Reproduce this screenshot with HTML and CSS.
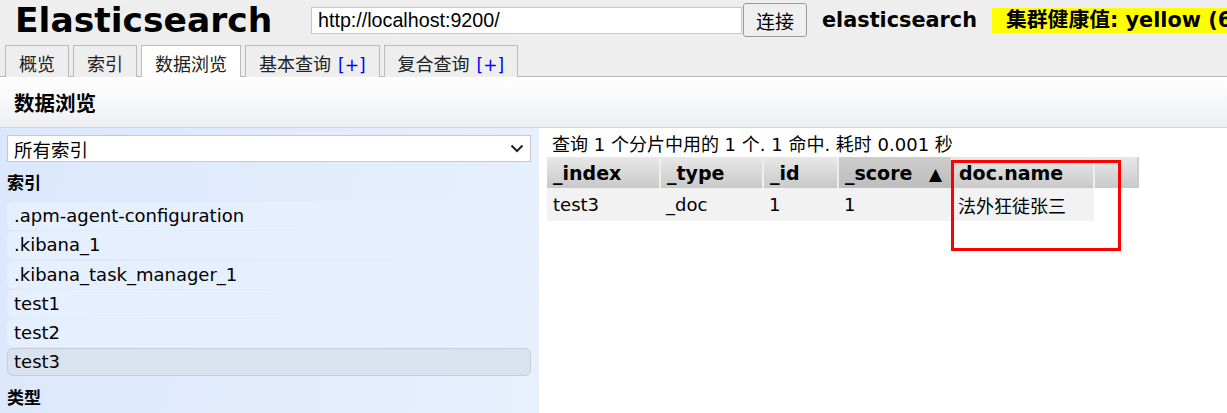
FILE: index.html
```html
<!DOCTYPE html>
<html>
<head>
<meta charset="utf-8">
<link rel="stylesheet" href="styles.css">
</head>
<body>
<div class="app">
  <header class="top">
    <h1 class="brand">Elasticsearch</h1>
    <input class="url" type="text" value="http://localhost:9200/">
    <button class="connect">连接</button>
    <span class="cluster">elasticsearch</span>
    <span class="health">集群健康值: yellow (6 of 12)</span>
  </header>
  <nav class="tabs">
    <div class="tab">概览</div>
    <div class="tab">索引</div>
    <div class="tab active">数据浏览</div>
    <div class="tab">基本查询 <span class="plus">[+]</span></div>
    <div class="tab">复合查询 <span class="plus">[+]</span></div>
  </nav>
  <div class="section-head">数据浏览</div>
  <div class="main">
    <aside class="side">
      <div class="select">
        <span>所有索引</span>
        <svg class="chev" width="14" height="9" viewBox="0 0 14 9"><path d="M1.5 1.5 L7 7 L12.5 1.5" fill="none" stroke="#222" stroke-width="2"/></svg>
      </div>
      <div class="side-title">索引</div>
      <ul class="idx">
        <li>.apm-agent-configuration</li>
        <li>.kibana_1</li>
        <li>.kibana_task_manager_1</li>
        <li>test1</li>
        <li>test2</li>
        <li class="sel">test3</li>
      </ul>
      <div class="side-title types">类型</div>
    </aside>
    <section class="results">
      <div class="summary">查询 1 个分片中用的 1 个. 1 命中. 耗时 0.001 秒</div>
      <table class="grid">
        <thead>
          <tr>
            <th class="c-index">_index</th>
            <th class="c-type">_type</th>
            <th class="c-id">_id</th>
            <th class="c-score sorted">_score <span class="arrow">▲</span></th>
            <th class="c-name">doc.name</th>
            <th class="c-pad"></th>
          </tr>
        </thead>
        <tbody>
          <tr>
            <td>test3</td>
            <td>_doc</td>
            <td>1</td>
            <td>1</td>
            <td>法外狂徒张三</td>
            <td class="empty"></td>
          </tr>
        </tbody>
      </table>
      <div class="mark"></div>
    </section>
  </div>
</div>
</body>
</html>
```
FILE: styles.css
```css
* { box-sizing: border-box; }
html, body { margin: 0; padding: 0; }
body {
  width: 1227px;
  height: 413px;
  overflow: hidden;
  background: #fff;
  font-family: "DejaVu Sans", Verdana, "Noto Sans CJK SC", sans-serif;
  font-size: 18px;
  color: #000;
}
.app { display: flex; flex-direction: column; height: 413px; }

.top {
  display: flex;
  align-items: center;
  height: 40px;
  background: #eee;
  padding-left: 15px;
  white-space: nowrap;
  overflow: hidden;
}
.brand {
  margin: 0;
  font-size: 34.5px;
  font-weight: bold;
  width: 296px;
  flex: none;
}
.url {
  flex: none;
  width: 431px;
  height: 27px;
  margin: 0;
  border: 1px solid #c8c8c8;
  background: #fff;
  padding: 0 6px;
  font-family: "Liberation Sans", Arial, sans-serif;
  font-size: 19.7px;
  color: #000;
}
.connect {
  flex: none;
  width: 64px;
  height: 34px;
  margin-left: 1px;
  border: 1px solid #999;
  border-radius: 3px;
  background: #efefef;
  font-family: "Noto Sans CJK SC", sans-serif;
  font-size: 19px;
  padding: 0;
  color: #000;
}
.cluster {
  margin-left: 15px;
  font-weight: bold;
  font-size: 20.8px;
  width: 170px;
  flex: none;
}
.health {
  flex: none;
  background: #ff0;
  height: 25px;
  line-height: 25px;
  padding-left: 14px;
  font-weight: bold;
  font-size: 20.8px;
}

.tabs {
  display: flex;
  gap: 4px;
  height: 37px;
  background: #eee;
  padding: 5px 0 0 5px;
  border-bottom: 1px solid #bbb;
}
.tab {
  height: 32px;
  padding: 4px 13px 0;
  border: 1px solid #bbb;
  border-bottom: none;
  background: #eee;
  font-family: "Noto Sans CJK SC", sans-serif;
  font-size: 18px;
  line-height: 26px;
  color: #222;
  white-space: nowrap;
}
.tab.active {
  background: #fff;
  height: 33px;
  margin-bottom: -1px;
}
.plus { color: #00f; margin-left: 3px; font-family: "DejaVu Sans", sans-serif; font-size: 17px; }

.section-head {
  height: 51px;
  padding: 13px 0 0 14px;
  background: linear-gradient(#fff, #eeeff1);
  border-bottom: 1px solid #d5d5d5;
  font-family: "Noto Sans CJK SC", sans-serif;
  font-weight: bold;
  font-size: 20.5px;
  line-height: 24px;
}

.main { display: flex; flex: 1; min-height: 0; }
.side {
  width: 539px;
  flex: none;
  background: linear-gradient(100deg, #dbe7fc, #e8f0fd);
  padding: 7px 8px 0 7px;
}
.select {
  display: flex;
  align-items: center;
  justify-content: space-between;
  height: 27px;
  background: #fff;
  border: 1px solid #c9c9c9;
  padding: 0 6px 0 6px;
  font-family: "Noto Sans CJK SC", sans-serif;
  font-size: 18.5px;
}
.side-title {
  margin: 8px 0 8px 0;
  font-family: "Noto Sans CJK SC", sans-serif;
  font-weight: bold;
  font-size: 17px;
  line-height: 24px;
}
.side-title.types { margin-top: 9px; }
.idx { list-style: none; margin: 0; padding: 0; display: flex; flex-direction: column; gap: 1.3px; }
.idx li {
  height: 28px;
  line-height: 28px;
  padding-left: 7px;
  border-radius: 6px;
  background: #e6effd;
  font-size: 18px;
}
.idx li.sel {
  background: #d9e2ee;
  border: 1px solid #c5cfdc;
  line-height: 26px;
  padding-left: 6px;
}

.results {
  position: relative;
  flex: 1;
  padding: 5px 0 0 8px;
}
.summary {
  font-size: 18px;
  line-height: 24px;
  margin-left: 5px;
  height: 24px;
  white-space: nowrap;
}
.grid {
  border-collapse: collapse;
  font-size: 18px;
}
.grid th {
  height: 31px;
  text-align: left;
  padding: 0 0 0 6px;
  background: linear-gradient(#e8e8e8, #c9c9c9);
  border-right: 2px solid #eee;
  font-weight: bold;
  font-size: 19px;
  white-space: nowrap;
}
.grid th.sorted { background: linear-gradient(#cdcdcd, #bdbdbd); }
.c-index { width: 113px; }
.c-type { width: 103px; }
.c-id { width: 75px; }
.c-score { width: 114px; }
.c-name { width: 142px; }
.c-pad { width: 44px; border-right: 2px solid #ccc !important; }
.arrow { margin-left: 10px; font-size: 17px; }
.grid td {
  height: 33px;
  padding: 0 0 0 6px;
  background: #f2f2f2;
  white-space: nowrap;
}
.grid td.empty { background: #fff; }
.mark {
  position: absolute;
  left: 412px;
  top: 32px;
  width: 170px;
  height: 91px;
  border: 3px solid #f00;
}
```
